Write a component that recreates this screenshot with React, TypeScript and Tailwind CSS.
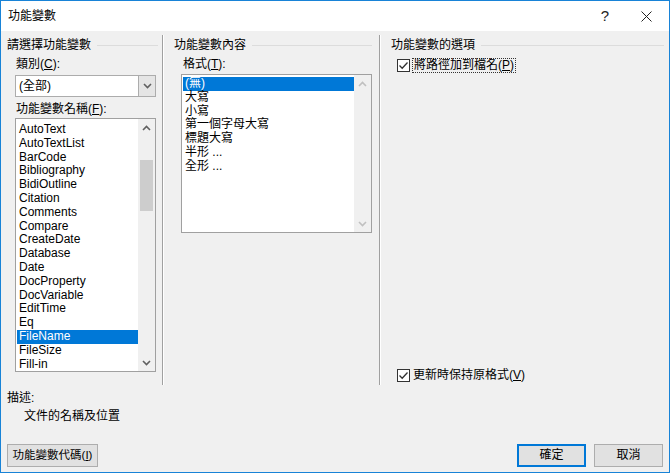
import React from "react";

const font = "font-['Liberation_Sans','Noto_Sans_CJK_TC',sans-serif]";

function ChevronUp({ color = "#606060" }: { color?: string }) {
  return (
    <svg width="9" height="6" viewBox="0 0 9 6">
      <path d="M1 5 L4.5 1.5 L8 5" fill="none" stroke={color} strokeWidth="1.6" />
    </svg>
  );
}
function ChevronDown({ color = "#606060" }: { color?: string }) {
  return (
    <svg width="9" height="6" viewBox="0 0 9 6">
      <path d="M1 1 L4.5 4.5 L8 1" fill="none" stroke={color} strokeWidth="1.6" />
    </svg>
  );
}

function Check() {
  return (
    <div className="w-[13px] h-[13px] border border-[#333333] bg-white flex items-center justify-center shrink-0">
      <svg width="11" height="11" viewBox="0 0 11 11">
        <path d="M1.5 5.5 L4.2 8.3 L9.5 2.5" fill="none" stroke="#333333" strokeWidth="1.3" />
      </svg>
    </div>
  );
}

function GroupHeader({ title, padRight }: { title: string; padRight: string }) {
  return (
    <div className={`flex items-center h-[12px] ${padRight}`}>
      <span className="leading-[12px] whitespace-nowrap">{title}</span>
      <div className="flex-1 ml-[6px] h-px bg-[#dcdcdc]" />
    </div>
  );
}

const names = [
  "AutoText",
  "AutoTextList",
  "BarCode",
  "Bibliography",
  "BidiOutline",
  "Citation",
  "Comments",
  "Compare",
  "CreateDate",
  "Database",
  "Date",
  "DocProperty",
  "DocVariable",
  "EditTime",
  "Eq",
  "FileName",
  "FileSize",
  "Fill-in",
];

const formats = ["(無)", "大寫", "小寫", "第一個字母大寫", "標題大寫", "半形 ...", "全形 ..."];

function VSep() {
  return (
    <div className="flex mt-[4px] h-[350px]">
      <div className="w-px bg-[#a0a0a0]" />
      <div className="w-px bg-white" />
    </div>
  );
}

export default function App() {
  return (
    <div
      className={`${font} text-[12px] text-black w-[670px] h-[473px] border border-[#1883d7] bg-[#f0f0f0] flex flex-col overflow-hidden`}
    >
      {/* Title bar */}
      <div className="h-[30px] bg-white flex items-center shrink-0">
        <span className="ml-[7px] text-[12px]">功能變數</span>
        <div className="flex-1" />
        <span className="text-[15px] mr-[32px] text-[#222]">?</span>
        <svg width="11" height="11" viewBox="0 0 11 11" className="mr-[17px]">
          <path d="M0.5 0.5 L10.5 10.5 M10.5 0.5 L0.5 10.5" stroke="#222" strokeWidth="1" />
        </svg>
      </div>

      {/* Main area */}
      <div className="flex h-[356px] shrink-0">
        {/* Left column */}
        <div className="w-[161px] pl-[6px] pt-[8px] flex flex-col">
          <GroupHeader title="請選擇功能變數" padRight="pr-[4px]" />
          <div className="ml-[9px] mt-[5px] h-[16px] leading-[16px]">
            類別(<span className="underline">C</span>):
          </div>
          <div className="ml-[8px] mt-[3px] w-[141px] h-[22px] border border-[#acacac] bg-white flex">
            <div className="flex-1 pl-[3px] leading-[20px]">(全部)</div>
            <div className="w-[17px] bg-[#e5e5e5] border-l border-[#acacac] flex items-center justify-center">
              <ChevronDown />
            </div>
          </div>
          <div className="ml-[9px] mt-[4px] h-[16px] leading-[16px]">
            功能變數名稱(<span className="underline">F</span>):
          </div>
          <div className="ml-[8px] mt-[1px] w-[141px] h-[254px] border border-[#a0a0a0] bg-white flex">
            <div className="flex-1 pt-[4px] pl-px">
              {names.map((n) => (
                <div
                  key={n}
                  className={`h-[13.8px] leading-[13.8px] pl-[2px] ${
                    n === "FileName" ? "bg-[#0078d7] text-white" : ""
                  }`}
                >
                  {n}
                </div>
              ))}
            </div>
            <div className="w-[17px] bg-[#f0f0f0] flex flex-col items-center">
              <div className="h-[17px] flex items-center justify-center">
                <ChevronUp />
              </div>
              <div className="mt-[24px] w-[13px] h-[51px] bg-[#cdcdcd]" />
              <div className="flex-1" />
              <div className="h-[17px] flex items-center justify-center">
                <ChevronDown />
              </div>
            </div>
          </div>
        </div>

        <VSep />

        {/* Middle column */}
        <div className="w-[215px] pl-[10px] pt-[8px] flex flex-col">
          <GroupHeader title="功能變數內容" padRight="pr-[7px]" />
          <div className="ml-[9px] mt-[5px] h-[16px] leading-[16px]">
            格式(<span className="underline">T</span>):
          </div>
          <div className="ml-[7px] mt-[2px] w-[191px] h-[159px] border border-[#a0a0a0] bg-white flex">
            <div className="flex-1 pt-[2px] pl-px">
              {formats.map((f, i) => (
                <div
                  key={f}
                  className={`h-[13.8px] leading-[13.8px] pl-[2px] ${
                    i === 0 ? "bg-[#0078d7] text-white" : ""
                  }`}
                >
                  {f}
                </div>
              ))}
            </div>
            <div className="w-[17px] bg-[#f0f0f0] flex flex-col items-center">
              <div className="h-[17px] flex items-center justify-center">
                <ChevronUp color="#c0c0c0" />
              </div>
              <div className="flex-1" />
              <div className="h-[17px] flex items-center justify-center">
                <ChevronDown color="#c0c0c0" />
              </div>
            </div>
          </div>
        </div>

        <VSep />

        {/* Right column */}
        <div className="flex-1 pl-[10px] pt-[8px] flex flex-col">
          <GroupHeader title="功能變數的選項" padRight="pr-[5px]" />
          <div className="ml-[6px] mt-[7px] flex items-center h-[15px]">
            <Check />
            <span className="ml-[2px] px-px border border-dotted border-[#333] leading-[13px]">
              將路徑加到檔名(<span className="underline">P</span>)
            </span>
          </div>
          <div className="flex-1" />
          <div className="ml-[6px] mb-[4px] flex items-center h-[15px]">
            <Check />
            <span className="ml-[3px] leading-[13px]">
              更新時保持原格式(<span className="underline">V</span>)
            </span>
          </div>
        </div>
      </div>

      {/* Description */}
      <div className="pl-[6px] mt-[4px] h-[14px] leading-[14px]">描述:</div>
      <div className="pl-[23px] mt-[4px] h-[14px] leading-[14px]">文件的名稱及位置</div>

      {/* Buttons */}
      <div className="flex items-center mt-[21px] px-[6px]">
        <button className="w-[91px] h-[23px] bg-[#e1e1e1] border border-[#adadad] text-[11.5px] leading-[21px]">
          功能變數代碼(<span className="underline">I</span>)
        </button>
        <div className="flex-1" />
        <button className="w-[69px] h-[23px] bg-[#e1e1e1] border-2 border-[#0078d7] text-[12px] leading-[19px]">
          確定
        </button>
        <button className="ml-[8px] w-[69px] h-[23px] bg-[#e1e1e1] border border-[#adadad] text-[12px] leading-[21px]">
          取消
        </button>
      </div>
    </div>
  );
}
